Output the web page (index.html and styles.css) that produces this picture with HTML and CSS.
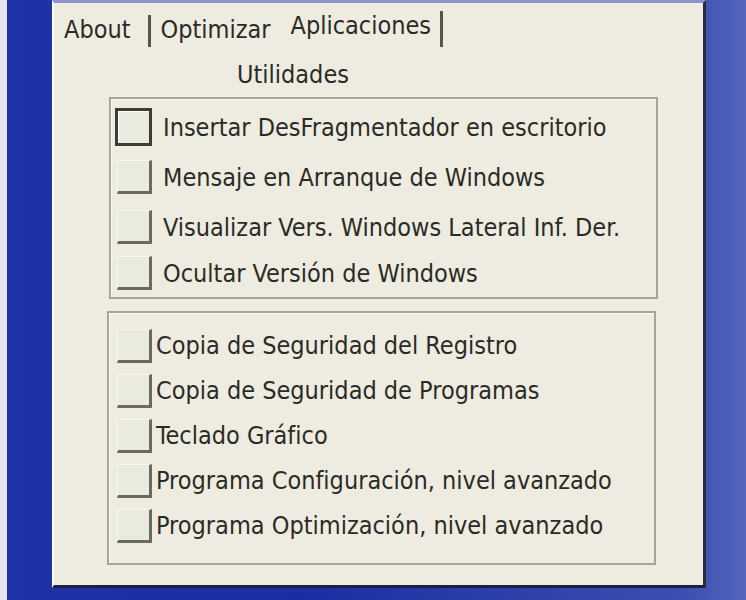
FILE: index.html
```html
<!DOCTYPE html>
<html lang="es">
<head>
    <meta charset="UTF-8">
    <title>Utilidades</title>
    <link rel="stylesheet" href="styles.css">
</head>
<body>
    <div class="window">
        <div class="tabs">
            <div class="tab tab-about">About</div>
            <div class="tab tab-opt">Optimizar</div>
            <div class="tab tab-apps active">Aplicaciones</div>
        </div>

        <div class="panel">
            <div class="panel-title">Utilidades</div>

            <div class="group group-top">
                <label class="row"><span class="check focused"></span><span class="text">Insertar DesFragmentador en escritorio</span></label>
                <label class="row"><span class="check"></span><span class="text">Mensaje en Arranque de Windows</span></label>
                <label class="row"><span class="check"></span><span class="text">Visualizar Vers. Windows Lateral Inf. Der.</span></label>
                <label class="row"><span class="check"></span><span class="text">Ocultar Versión de Windows</span></label>
            </div>

            <div class="group group-bottom">
                <label class="row"><span class="check"></span><span class="text">Copia de Seguridad del Registro</span></label>
                <label class="row"><span class="check"></span><span class="text">Copia de Seguridad de Programas</span></label>
                <label class="row"><span class="check"></span><span class="text">Teclado Gráfico</span></label>
                <label class="row"><span class="check"></span><span class="text">Programa Configuración, nivel avanzado</span></label>
                <label class="row"><span class="check"></span><span class="text">Programa Optimización, nivel avanzado</span></label>
            </div>
        </div>
    </div>
</body>
</html>
```

FILE: styles.css
```css
body {
    margin: 0;
    width: 746px;
    height: 600px;
    overflow: hidden;
    box-sizing: border-box;
    border-left: 7px solid #e4e4f0;
    background: linear-gradient(90deg, #1f33a8 0%, #1a2ea2 40%, #3c4fb2 92%, #5565bb 100%);
    font-family: "DejaVu Sans Condensed", "DejaVu Sans", sans-serif;
    font-stretch: condensed;
    font-size: 25px;
    color: #2b2b26;
}

.window {
    margin-left: 45px;
    width: 654px;
    height: 588px;
    box-sizing: border-box;
    background: #eeece0;
    border-top: 3px solid #8a93cc;
    border-left: 2px solid #fbfbf6;
    border-right: 3px solid #2c2c3a;
    border-bottom: 3px solid #1e2040;
}

/* tab strip */
.tabs {
    display: flex;
    align-items: flex-end;
    height: 44px;
    padding-left: 10px;
}

.tab {
    line-height: 30px;
    padding-bottom: 2px;
}

.tab-about {
    padding-right: 17px;
    border-right: 3px solid #55554c;
}

.tab-opt {
    padding-left: 10px;
    padding-right: 20px;
}

.tab-apps {
    padding-right: 9px;
    padding-bottom: 6px;
    border-right: 3px solid #55554c;
}

/* panel body */
.panel {
    padding-left: 55px;
}

.panel-title {
    margin-left: 128px;
    line-height: 30px;
    margin-top: 13px;
    margin-bottom: 7px;
}

.group {
    width: 549px;
    box-sizing: border-box;
    border: 2px solid #a6a496;
    box-shadow: inset 1px 1px 0 #fafaf4;
}

.group-top {
    padding: 3px 0 3px 4px;
}

.group-top .row {
    height: 50px;
}

.group-top .row:last-child {
    height: 42px;
}

.group-top .text {
    margin-left: 11px;
}

.group-bottom {
    margin-top: 12px;
    margin-left: -2px;
    padding: 10px 0 15px 6px;
}

.group-bottom .row {
    height: 45px;
}

.group-bottom .text {
    margin-left: 4px;
}

.row {
    display: flex;
    align-items: center;
}

/* flat XP-style toggle boxes */
.check {
    width: 35px;
    height: 34px;
    box-sizing: border-box;
    margin-left: 2px;
    background: #ebeadf;
    border-top: 1px solid #f6f6ee;
    border-left: 1px solid #f6f6ee;
    border-right: 3px solid #6a6a60;
    border-bottom: 3px solid #6a6a60;
}

.check.focused {
    width: 37px;
    height: 38px;
    margin-left: 0;
    border: 3px solid #3d3d34;
    box-shadow: inset 1px 1px 0 #fff;
}

.text {
    white-space: nowrap;
}
```
